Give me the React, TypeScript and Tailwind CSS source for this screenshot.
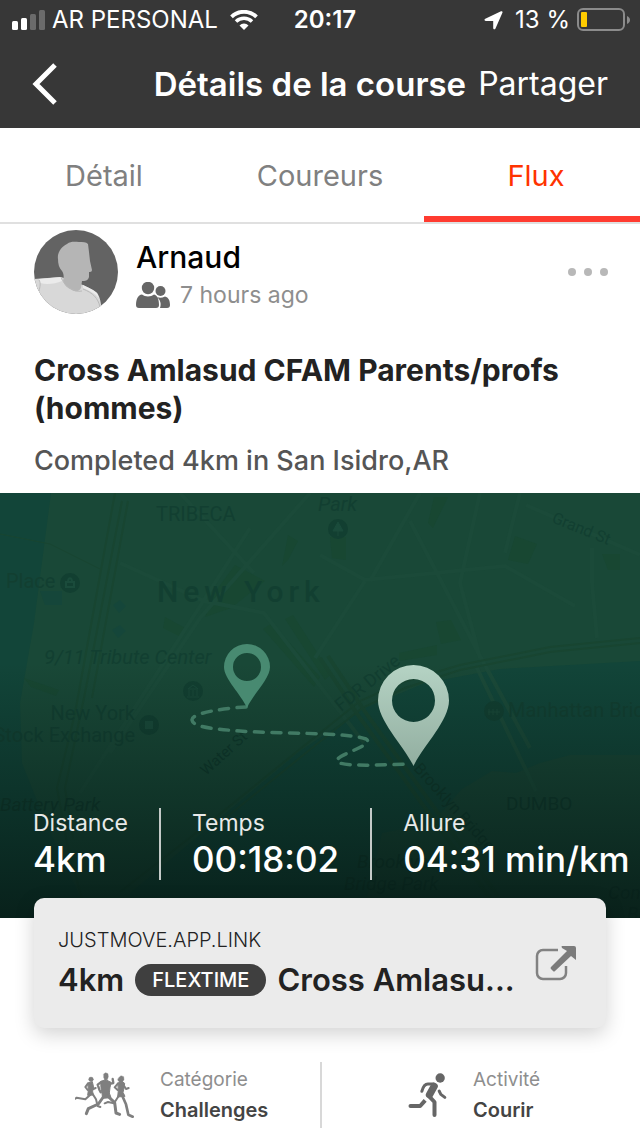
import type { ReactNode } from 'react'

function StatusBar() {
  return (
    <div className="grid h-10 grid-cols-[1fr_auto_1fr] items-center pl-3 pr-[10px] text-[24px] leading-7">
      <div className="flex items-center">
        <svg width="34" height="20" viewBox="0 0 34 20" fill="#fff" aria-hidden="true">
          <rect x="0" y="11" width="6" height="9" rx="1.5" />
          <rect x="9" y="8" width="6" height="12" rx="1.5" />
          <rect x="18" y="4" width="6" height="16" rx="1.5" fill="#6b6b6b" />
          <rect x="27" y="0" width="6" height="20" rx="1.5" fill="#6b6b6b" />
        </svg>
        <span className="ml-[6px] whitespace-nowrap">AR PERSONAL</span>
        <svg className="ml-3" width="28" height="20" viewBox="0 0 28 20" aria-hidden="true">
          <path d="M1.5 6.8A18 18 0 0 1 26.500 6.800" fill="none" stroke="#fff" strokeWidth="3.800" />
          <path d="M6 11.500a11.500 11.500 0 0 1 16 0" fill="none" stroke="#fff" strokeWidth="3.500" />
          <path d="M14 20l-4.500-4.600a6.500 6.500 0 0 1 9 0z" fill="#fff" />
        </svg>
      </div>
      <time className="pl-2 font-semibold">20:17</time>
      <div className="flex items-center justify-end">
        <svg width="19" height="19" viewBox="0 0 19 19" fill="#fff" aria-hidden="true">
          <path d="M17 .3c1-.4 1.900.4 1.400 1.500L11.500 17.500c-.6 1.300-2.300 1-2.300-.4V10H1.800C.3 10 0 8.300 1.300 7.700z" />
        </svg>
        <span className="ml-3 whitespace-nowrap">13 %</span>
        <svg className="ml-[7px]" width="53" height="24" viewBox="0 0 53 24" aria-hidden="true">
          <rect x="1" y="1" width="46" height="21" rx="5" fill="none" stroke="#8b8b8b" strokeWidth="2" />
          <rect x="4" y="4" width="6" height="15" rx="1" fill="#ffcc00" />
          <path d="M50 8c4 1.500 4 6.500 0 8z" fill="#8b8b8b" />
        </svg>
      </div>
    </div>
  )
}

function NavBar() {
  return (
    <div className="flex h-[88px] items-center pl-8 pr-8">
      <button aria-label="Retour">
        <svg width="26" height="42" viewBox="0 0 26 42" fill="none" stroke="#fff" strokeWidth="5" aria-hidden="true">
          <path d="M23 2L4 21l19 19" />
        </svg>
      </button>
      <h1 className="ml-auto whitespace-nowrap text-[33px] font-semibold leading-10">Détails de la course</h1>
      <button className="ml-3 text-[32px] leading-10">Partager</button>
    </div>
  )
}

function Tabs() {
  return (
    <nav className="grid grid-cols-[208fr_216fr_216fr] border-b-2 border-[#e0e0e0] text-center text-[29px] leading-10 text-[#808080]">
      <a href="#detail" className="border-b-[6px] border-transparent pb-5 pt-7">Détail</a>
      <a href="#coureurs" className="border-b-[6px] border-transparent pb-5 pl-2 pt-7">Coureurs</a>
      <a href="#flux" aria-current="page" className="border-b-[6px] border-[#ff3b30] pb-5 pl-2 pt-7 text-[#ff3300]">Flux</a>
    </nav>
  )
}

function Avatar() {
  return (
    <svg width="84" height="84" viewBox="0 0 84 84" role="img" aria-label="Arnaud">
      <clipPath id="avatar-clip">
        <circle cx="42" cy="42" r="42" />
      </clipPath>
      <g clipPath="url(#avatar-clip)">
        <rect width="84" height="84" fill="#636363" />
        <path d="M0 49l27-2 22 8c5 3 10 4 14 8 3 4 4 8 5 21H0z" fill="#d8d8d8" />
        <path d="M5 49l22-2 1 4c-7 3-15 4-22 2zM49 55c6 3 11 5 14 8l2 5c-5-5-10-8-16-10z" fill="#ebebeb" />
        <path d="M33 14c4-3 8-2 12-2 4 0 7 0 9 2l1 8 1 9 2 9c0 2-2 2-3 2v5c-1 4-4 4-7 4l-1 7c-2 4-6 4-9 2-5-2-8-5-9-9 1-4 1-7-1-10-3-3-4-7-4-12-1-6 3-12 9-15z" fill="#b5b5b5" />
        <path d="M27 47c3 9 13 16 21 14M49 59c10 4 15 9 17 18M5 50c2 3 1 7 0 11" fill="none" stroke="#b9b9b9" />
      </g>
    </svg>
  )
}

function PostHeader() {
  return (
    <div className="flex items-center pl-[34px] pr-8 pt-[6px]">
      <Avatar />
      <div className="ml-[18px] pt-2 leading-[38px]">
        <p className="text-[30px] font-medium text-black">Arnaud</p>
        <p className="flex items-center text-[23px] text-[#8e8e8e]">
          <svg className="mr-[10px]" width="34" height="26" viewBox="0 0 34 26" fill="#666" aria-hidden="true">
            <circle cx="12" cy="6" r="6.200" />
            <circle cx="24.500" cy="9" r="5" />
            <path d="M0 23c0-6 2-10 6-10.500 3 2.500 9 2.500 12 0 3.500 1 5 5 5 10.500 0 2-1 3-3 3H3c-2 0-3-1-3-3z" />
            <path d="M21 15c2.500 1.300 5 1 8-.5 3.500 1 5 4 5 8.500 0 2-1 3-3 3h-7c1.500-4 .500-8-3-11z" />
          </svg>
          7 hours ago
        </p>
      </div>
      <button className="ml-auto" aria-label="Plus d’options">
        <svg width="40" height="8" viewBox="0 0 40 8" fill="#b8b8b8" aria-hidden="true">
          <circle cx="4" cy="4" r="4" />
          <circle cx="20" cy="4" r="4" />
          <circle cx="36" cy="4" r="4" />
        </svg>
      </button>
    </div>
  )
}

function RouteMap() {
  return (
    <svg
      className="absolute inset-0 h-full w-full"
      viewBox="0 0 640 425"
      preserveAspectRatio="xMidYMid slice"
      fontFamily="Roboto, sans-serif"
      aria-hidden="true"
    >
      <defs>
        <linearGradient id="map-shade" x1="0" y1="0" x2="0" y2="1">
          <stop offset="0.400" stopColor="#061c17" stopOpacity="0" />
          <stop offset="0.720" stopColor="#061c17" stopOpacity="0.450" />
          <stop offset="1" stopColor="#061a15" stopOpacity="0.840" />
        </linearGradient>
        <linearGradient id="pin-shade" x1="0" y1="0" x2="0" y2="1">
          <stop offset="0" stopColor="#b5d3c4" />
          <stop offset="1" stopColor="#92aea0" />
        </linearGradient>
      </defs>
      <rect width="640" height="425" fill="#194837" />

      {/* water */}
      <g fill="#124539">
        <path d="M0 0h51L34 130 20 210 22 270 46 330 90 425H0z" />
        <path d="M640 168L500 176 425 190 365 215 300 258 220 325 130 400V425H640z" />
        <path d="M113 112l7-5 6 6-7 7zM112 137l8-5 6 6-8 7zM40 98h22v14H45z" fill="#15463a" />
      </g>
      <path d="M640 262H570l-30 8-24 10-24-2-30 18-30 34-50 10-20 85h308z" fill="#194636" />

      {/* parks */}
      <g fill="#184732">
        <path d="M235 72l30 16-34 27-26 9 10-25zM288 42l10 6-10 19-6 6zM165 124l20 11-6 8-16-8z" />
        <path d="M515 43l22 8-9 20-20-4zM434 4h14l-15 31-5-5zM330 44h16v23l-14-2zM602 61h18v16h-12z" />
        <path d="M436 129l15-2 10 20-20 4zM399 160l38-8v10l-38 6z" />
        <path d="M263 136l9-6 48 54-6 10zM285 126l8-4 38 59-6 6zM24 185l35 12-3 6-25-9z" />
      </g>

      {/* streets and bridges */}
      <g fill="none" stroke="#1b4a39" strokeWidth="4">
        <path d="M120 70l84 38 60 12 100 130M180 0l74 80M250 35L170 160 80 300M310 0L200 125 110 260" />
        <path d="M320 62l45 25 140-14 70 40M365 88L315 165M420 0L370 88M410 28l70 135 50 92M480 0l-20 90 20 75M520 0l-15 60" />
        <path d="M526 12l114 50M592 55v35l5 55M476 173l60 125" />
      </g>
      <g fill="none" stroke="#184531" strokeWidth="2">
        <path d="M115 0L75 220l-18 75 10 55 20 75M122 8L85 200l-20 95 8 50M128 8L92 205" />
        <path d="M640 145l-90 9-90 18-60 18-40 18-55 44-95 77-90 70M640 150l-90 9-90 18-55 18-43 20-55 44-95 77" />
        <path d="M320 165l40 60 130 180M328 163l40 60 130 180" strokeWidth="4" />
        <path d="M0 41l50 10 50 25" strokeWidth="1" />
      </g>

      {/* places */}
      <g fill="#123f31" fontSize="20">
        <text x="156" y="28">TRIBECA</text>
        <text x="318" y="18" fontStyle="italic">Park</text>
        <text x="6" y="95">Place</text>
        <text x="157" y="109" fontSize="30" fontWeight="500" letterSpacing="5">New York</text>
        <text x="44" y="171" fontStyle="italic">9/11 Tribute Center</text>
        <text x="135" y="227" textAnchor="end">New York</text>
        <text x="135" y="249" textAnchor="end">Stock Exchange</text>
        <text x="508" y="224">Manhattan Bridge</text>
        <text x="551" y="29" fontSize="16" transform="rotate(22 551 29)">Grand St</text>
        <text x="341" y="219" fontSize="18" transform="rotate(-39 341 219)">FDR Drive</text>
        <circle cx="70" cy="90" r="10" />
        <circle cx="338" cy="36" r="10" />
        <circle cx="193" cy="198" r="10" />
        <circle cx="149" cy="232" r="10" />
        <circle cx="494" cy="218" r="10" />
      </g>
      <g fill="#0f392c" fontSize="19">
        <text x="206" y="283" fontSize="15" transform="rotate(-42 206 283)">Water St</text>
        <text x="0" y="318" fontStyle="italic">Battery Park</text>
        <text x="413" y="276" fontSize="16" transform="rotate(48 413 276)">Brooklyn Bridge</text>
        <text x="506" y="317">DUMBO</text>
        <text x="357" y="375" fontStyle="italic">Brooklyn</text>
        <text x="344" y="397" fontStyle="italic">Bridge Park</text>
        <text x="608" y="406" fontStyle="italic">Con</text>
        <text x="627" y="427" fontStyle="italic">Bi</text>
      </g>
      <g fill="none" stroke="#1a4b3b" strokeWidth="2">
        <path d="M66 89h8v5h-8zM68 89c0-5 4-5 4 0" />
        <path d="M338 29l-5 9h10zM338 38v5" fill="#1a4b3b" strokeWidth="1" />
        <path d="M188 196l5-4 5 4zM189 197v6M193 197v6M197 197v6M187 204h12M489 222v-6M493 222v-6M497 222v-6M488 219h12" strokeWidth="1" />
        <path d="M146 229h6v6h-6z" fill="#1a4b3b" />
      </g>

      <rect width="640" height="425" fill="url(#map-shade)" />

      {/* run, start to finish */}
      <path
        d="M246 214C225 215 191 220 192 227C193 234 212 236 240 238C280 241 348 239 366 246C376 252 335 262 337 268C339 274 380 272 411 271"
        fill="none"
        stroke="#417a64"
        strokeWidth="3.500"
        strokeLinecap="round"
        strokeDasharray="9 8.500"
      />
      <path
        fillRule="evenodd"
        fill="#488a71"
        d="M247 215C241 201 224 186 224 174a23 23 0 0 1 46 0C270 186 253 201 247 215zM247 160a14 14 0 1 0 0 28a14 14 0 0 0 0-28z"
      />
      <path
        fillRule="evenodd"
        fill="url(#pin-shade)"
        d="M413.500 273C404 253 378 228 378 207.500a35.500 35.500 0 0 1 71 0C449 228 423 253 413.500 273zM413.500 186a21.500 21.500 0 1 0 0 43a21.500 21.500 0 0 0 0-43z"
      />
    </svg>
  )
}

function Stat({ label, value }: { label: string; value: string }) {
  return (
    <div className="h-[72px] whitespace-nowrap border-l-2 border-[#c4cac8] px-[31px] first:border-l-0 first:pl-0 last:pr-0">
      <dt className="text-[23px] leading-[30px] text-[#e8eae9]">{label}</dt>
      <dd className="text-[35px] font-medium leading-[42px] text-white">{value}</dd>
    </div>
  )
}

function LinkCard() {
  return (
    <a
      href="#justmove"
      className="relative mx-[34px] -mt-5 flex h-[130px] items-center rounded-[10px] bg-[#ebebeb] pl-6 pr-[30px] text-[#222] shadow-[0_6px_20px_rgba(0,0,0,0.18)]"
    >
      <div className="min-w-0 flex-1">
        <p className="text-[20px] font-light leading-7">JUSTMOVE.APP.LINK</p>
        <p className="mt-[6px] flex items-center whitespace-nowrap text-[31px] font-semibold leading-10">
          4km
          <span className="mx-[11px] rounded-full bg-[#3f3f3f] px-[17px] text-[20px] font-medium leading-8 text-white">FLEXTIME</span>
          Cross Amlasu...
        </p>
      </div>
      <svg width="41" height="36" viewBox="0 0 41 36" fill="none" aria-hidden="true">
        <path d="M23 5H8a6 6 0 0 0-6 6v17a6 6 0 0 0 6 6h17a6 6 0 0 0 6-6v-7" stroke="#828282" strokeWidth="2.500" />
        <path d="M27 1h12q2 0 2 2v12l-5-4-16 15q-1 1-2 0l-2-2q-1-1 0-2L32 6l-5-3q-1-2 0-2z" fill="#7b7b7b" />
      </svg>
    </a>
  )
}

function RunnersIcon() {
  return (
    <svg
      width="59"
      height="46"
      viewBox="45 32 177 138"
      fill="#7f7f7f"
      stroke="#7f7f7f"
      strokeLinecap="round"
      strokeLinejoin="round"
      aria-hidden="true"
    >
      <circle cx="93" cy="54" r="7" />
      <path d="M84 65l13-4 3 13-2 17 2 10-17 1 2-15z" strokeWidth="3" />
      <path d="M84 66l-8 11 7 9M98 77l2 6 7-3M91 100l-15 14-26-5-4 3M98 98l10 16 5 20 8 3" fill="none" strokeWidth="6" />
      <path d="M131 38l6-4 7 3 1 9-3 9-8 1-3-8z" />
      <path d="M123 60l14-5 16 8-3 16-2 16 5 14-25 2-2-15-3-16z" strokeWidth="3" />
      <path d="M124 62l-11 8 5 15 4 8M152 67l8-2-2-12" fill="none" strokeWidth="7" />
      <path d="M132 104l-17 24-30 14-6 15M143 104l21 20 4 31 11 4" fill="none" strokeWidth="9" />
      <path d="M176 49l7-6 8 3 1 9-4 6-8 3-7-8z" />
      <path d="M174 65l13-4 7 5-2 15-3 12 6 12-22 2 2-20z" strokeWidth="3" />
      <path d="M174 66l-10 12 9 8M193 75l5 8 8-3M176 104l-14 22-18-4-10 4" fill="none" strokeWidth="6" />
      <path d="M187 104l11 25 7 31 13 6" fill="none" strokeWidth="8" />
    </svg>
  )
}

function RunnerIcon() {
  return (
    <svg width="39" height="44" viewBox="20 38 116 132" fill="none" stroke="#666" strokeLinecap="round" strokeLinejoin="round" aria-hidden="true">
      <circle cx="116" cy="53" r="14" fill="#666" stroke="none" />
      <path d="M61 93c3-11 9-22 18-22h17" strokeWidth="9" />
      <path d="M98 78L84 103" strokeWidth="22" />
      <path d="M83 108l16 17v39" strokeWidth="12" />
      <path d="M71 120l-15 17H27" strokeWidth="12" strokeLinecap="butt" />
      <circle cx="27" cy="137" r="6" fill="#666" stroke="none" />
      <path d="M113 92l5 10 12 9" strokeWidth="9" />
    </svg>
  )
}

function Fact({ icon, label, value }: { icon: ReactNode; label: string; value: string }) {
  return (
    <div className="flex h-[66px] items-center gap-[26px] border-l-2 border-[#d8d8d8] pl-[86px] first:border-l-0 first:pl-[75px]">
      {icon}
      <dl className="leading-[30px]">
        <dt className="text-[19px] text-[#8e8e8e]">{label}</dt>
        <dd className="text-[20px] font-semibold text-[#444]">{value}</dd>
      </dl>
    </div>
  )
}

export default function App() {
  return (
    <div className="min-h-screen overflow-x-hidden bg-white pb-2 font-[Inter,sans-serif]">
      <header className="bg-[#373737] text-white">
        <StatusBar />
        <NavBar />
      </header>
      <Tabs />

      <main>
        <article>
          <PostHeader />
          <div className="px-[34px] pb-[14px] pt-[37px]">
            <h2 className="text-[30px] font-bold leading-[38px] text-[#222]">Cross Amlasud CFAM Parents/profs (hommes)</h2>
            <p className="mt-4 text-[27px] font-medium leading-9 text-[#555]">Completed 4km in San Isidro,AR</p>
          </div>

          <section className="relative flex min-h-[425px] items-end overflow-hidden pb-[38px] pl-[33px]">
            <RouteMap />
            <dl className="relative flex">
              <Stat label="Distance" value="4km" />
              <Stat label="Temps" value="00:18:02" />
              <Stat label="Allure" value="04:31 min/km" />
            </dl>
          </section>

          <LinkCard />

          <div className="mt-[34px] grid grid-cols-2">
            <Fact icon={<RunnersIcon />} label="Catégorie" value="Challenges" />
            <Fact icon={<RunnerIcon />} label="Activité" value="Courir" />
          </div>
        </article>
      </main>
    </div>
  )
}
